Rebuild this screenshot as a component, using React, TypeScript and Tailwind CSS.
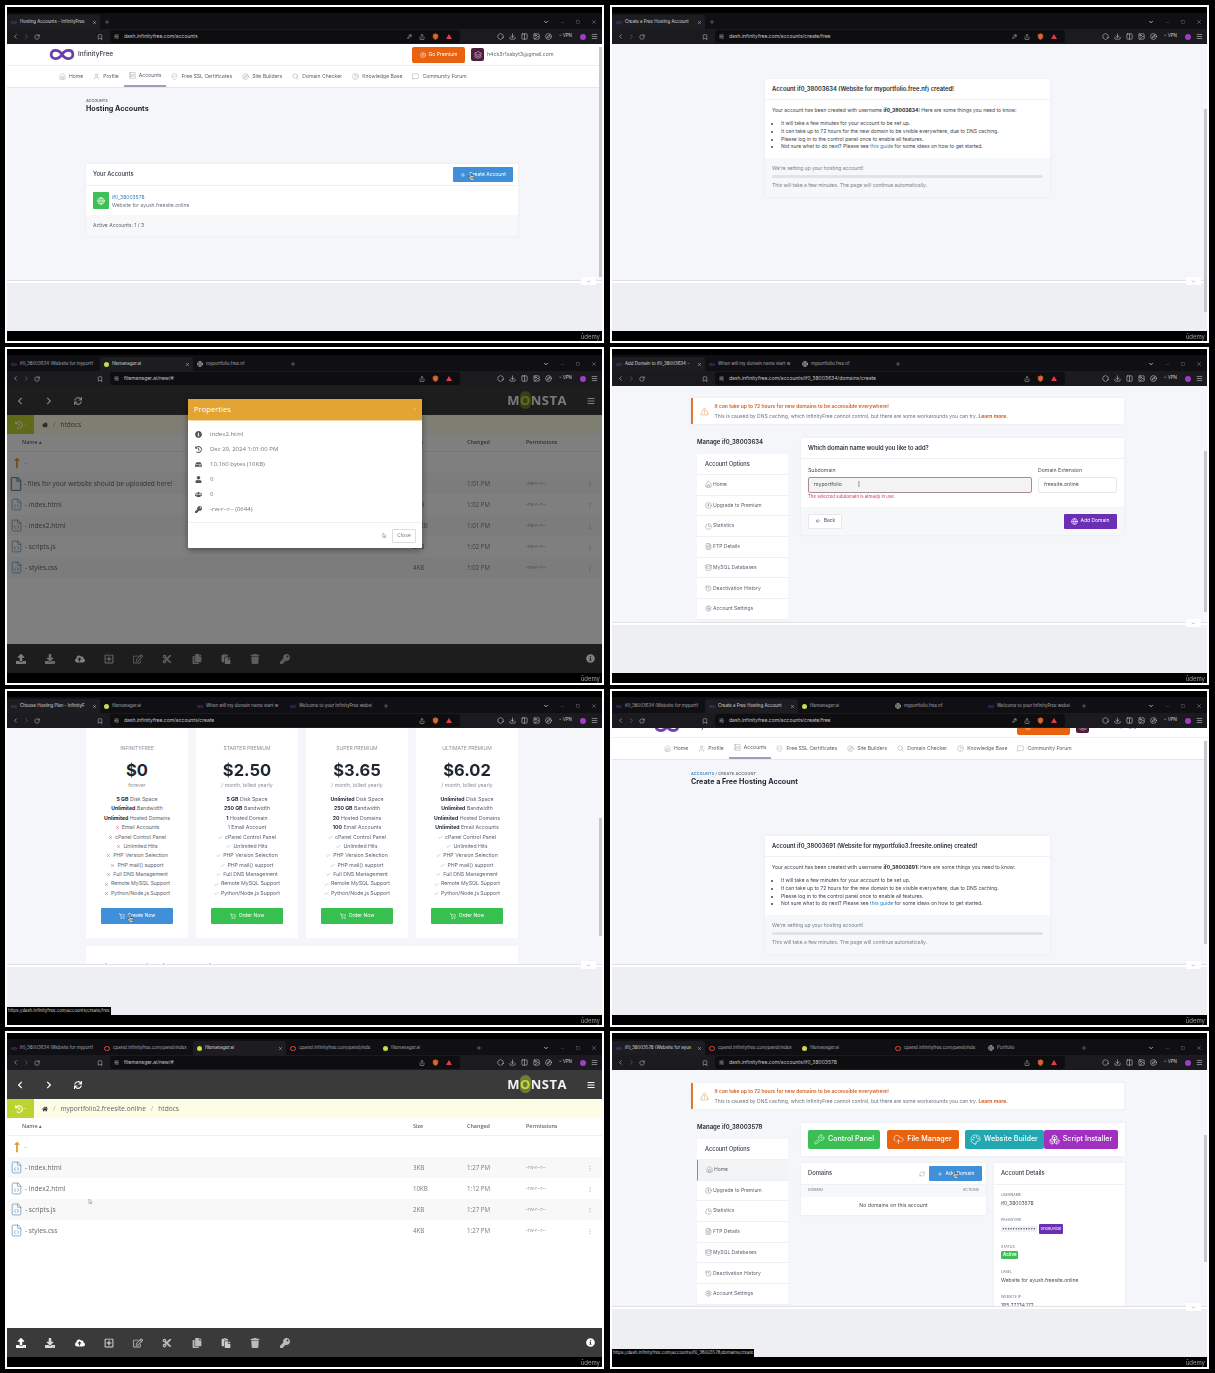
import type { ReactNode } from 'react';
import {
  ArrowLeft, Bookmark, Boxes, Check, ChevronDown, ChevronLeft, ChevronRight, CircleArrowUp, CircleHelp, CloudUpload,
  Columns2, Compass, Database, Download, FileCode, FileText, Globe, Hexagon, History, House, Image, KeyRound, Layers, Menu,
  MessageSquare, Minus, Palette, PieChart, Plus, RefreshCw, RotateCw, Search, Server, Settings, ShieldCheck, ShoppingCart, Share, Shield,
  SlidersHorizontal, Square, TriangleAlert, User, Wrench, X,
} from 'lucide-react';
import {
  FaBars, FaChevronLeft, FaChevronRight, FaCloudUploadAlt, FaCopy, FaCut, FaDownload, FaHandPointer, FaHdd, FaHistory,
  FaHome, FaInfoCircle, FaKey, FaLongArrowAltUp, FaMousePointer, FaPaste, FaRegEdit, FaRegFile, FaRegPlusSquare, FaSync, FaTrash, FaUpload, FaUser, FaUsers,
} from 'react-icons/fa';

type TabKind = 'inf' | 'fm' | 'cp' | 'globe';
type TabInfo = { kind: TabKind; title: string; active?: boolean };

const sans = '[font-family:Inter,sans-serif]';
const monstaFont = '[font-family:"Open_Sans",sans-serif]';

function Favicon({ kind }: { kind: TabKind }) {
  if (kind === 'fm') return <span className="block h-[5px] w-[5px] shrink-0 rounded-full bg-[#c9dc4a]" />;
  if (kind === 'cp') return <span className="block h-[5px] w-[6px] shrink-0 rounded-full border border-[#e0492f]" />;
  if (kind === 'globe') return <Globe className="h-[6px] w-[6px] shrink-0 text-[#d4d4d4]" />;
  return <InfinityMark className="h-[3px] w-[6px] shrink-0" />;
}

function InfinityMark({ className }: { className: string }) {
  return (
    <svg viewBox="0 0 24 12" fill="none" className={className}>
      <path d="M12 6C9 1 2 1 2 6s7 5 10 0 10-5 10 0-7 5-10 0Z" stroke="#6d3fa8" strokeWidth="2.6" />
    </svg>
  );
}

function Chrome({ tabs, url, keyIcon = true }: { tabs: TabInfo[]; url: string; keyIcon?: boolean }) {
  return (
    <>
      <div className={`flex h-[16px] items-end bg-[#101014] text-[4.4px] text-[#a9a9ad] ${sans}`}>
        {tabs.map((t) => (
          <div key={t.title + t.kind} className={`flex h-[14px] w-[93px] shrink-0 items-center gap-[3px] rounded-t-[3px] pl-[4px] pr-[3px] ${t.active ? 'bg-[#1d1d21] text-[#dcdcdc]' : ''}`}>
            <Favicon kind={t.kind} />
            <span className="flex-1 whitespace-nowrap">{t.title}</span>
            {t.active && <X className="h-[5px] w-[5px] shrink-0" />}
          </div>
        ))}
        <Plus className="mb-[4px] ml-[4px] h-[6px] w-[6px] text-[#8f8f95]" />
        <div className="mb-[4px] ml-auto flex items-center gap-[11px] pr-[5px] text-[#8a8a8e]">
          <ChevronDown className="h-[6px] w-[6px] text-[#ddd]" strokeWidth={3} />
          <Minus className="h-[5px] w-[5px] text-[#55555a]" />
          <Square className="h-[4px] w-[4px]" />
          <X className="h-[6px] w-[6px]" />
        </div>
      </div>
      <div className={`flex h-[15px] items-center bg-[#1b1b1f] text-[#c9c9cc] ${sans}`}>
        <div className="flex w-[103px] shrink-0 items-center pl-[5px]">
          <ChevronLeft className="h-[7px] w-[7px]" />
          <ChevronRight className="ml-[4px] h-[7px] w-[7px] text-[#77777c]" />
          <RotateCw className="ml-[4px] h-[6px] w-[6px]" />
          <Bookmark className="ml-[57px] h-[6px] w-[6px]" />
        </div>
        <div className="flex h-[13px] w-[350px] shrink-0 items-center rounded-[3px] bg-[#0e0e11] px-[4px]">
          <SlidersHorizontal className="h-[5px] w-[5px]" />
          <span className="ml-[5px] flex-1 text-[5px] text-[#c4c4c8]">{url}</span>
          {keyIcon && <KeyRound className="mr-[7px] h-[5px] w-[5px]" />}
          <Share className="h-[6px] w-[6px]" />
          <Shield className="ml-[7px] h-[7px] w-[7px] fill-[#d9662f] text-[#d9662f]" />
          <span className="ml-[7px] mr-[4px] h-0 w-0 border-x-[3px] border-b-[5px] border-x-transparent border-b-[#e23b4b]" />
        </div>
        <div className="ml-auto flex items-center gap-[5px] pr-[4px]">
          <Hexagon className="h-[7px] w-[7px]" />
          <Download className="h-[7px] w-[7px]" />
          <Columns2 className="h-[7px] w-[7px]" />
          <Image className="h-[7px] w-[7px]" />
          <Compass className="h-[7px] w-[7px]" />
          <span className="ml-[2px] text-[4.5px]">◦ VPN</span>
          <span className="ml-[3px] h-[6px] w-[6px] rounded-full bg-[#a13cc9]" />
          <Menu className="h-[7px] w-[7px]" />
        </div>
      </div>
    </>
  );
}

function Frame({ chrome, children, thumb, status, noStrip }: { chrome: ReactNode; children: ReactNode; thumb?: string; status?: string; noStrip?: boolean }) {
  return (
    <div className="relative h-[338px] w-[599px] overflow-hidden border-2 border-white bg-black">
      <div className="flex h-full flex-col pt-[6px] blur-[0.35px]">
        {chrome}
        {noStrip ? (
          <div className="relative h-[287px] overflow-hidden">{children}</div>
        ) : (
          <>
            <div className="relative h-[236px] overflow-hidden bg-[#f4f6f9]">{children}</div>
            <div className="h-[1px] bg-[#dfe1e5]" />
            <div className="h-[2px] bg-white" />
            <div className="relative h-[48px] bg-[#eeeff3]">
              {status && <div className={`absolute bottom-0 left-0 bg-black px-[1px] text-[4.3px] leading-[8px] whitespace-nowrap text-[#cfcfcf] ${sans}`}>{status}</div>}
            </div>
            <div className="absolute right-[6px] top-[270px] flex h-[8px] w-[15px] items-center justify-center bg-white">
              <ChevronDown className="h-[5px] w-[5px] text-[#666]" />
            </div>
          </>
        )}
        <div className={`flex flex-1 items-center justify-end pr-[2px] text-[6px] text-[#a0a0a0] ${sans}`}>ûdemy</div>
        {thumb && <div className={`absolute right-0 w-[3px] bg-[#c5c7cb] ${thumb}`} />}
      </div>
    </div>
  );
}

const navItems = [
  { label: 'Home', icon: House },
  { label: 'Profile', icon: User },
  { label: 'Accounts', icon: Server },
  { label: 'Free SSL Certificates', icon: ShieldCheck },
  { label: 'Site Builders', icon: Compass },
  { label: 'Domain Checker', icon: Search },
  { label: 'Knowledge Base', icon: CircleHelp },
  { label: 'Community Forum', icon: MessageSquare },
];

function SiteHeader({ scrolled }: { scrolled?: boolean }) {
  return (
    <div className={`bg-white ${sans} ${scrolled ? '-mt-[12px]' : ''}`}>
      <div className="flex h-[22px] items-center border-b border-[#eceef1] pl-[42px]">
        <InfinityMark className="h-[13px] w-[26px]" />
        <span className="ml-[3px] w-[35px] whitespace-nowrap text-[6.5px] font-medium text-[#333a45]">InfinityFree</span>
        <div className="ml-[299px] flex h-[16px] w-[53px] items-center justify-center gap-[3px] rounded-[2px] bg-[#e8620f] text-[5px] text-white">
          <CircleArrowUp className="h-[6px] w-[6px]" /> Go Premium
        </div>
        <span className="ml-[6px] flex h-[13px] w-[13px] items-center justify-center rounded-[2px] bg-[#4c1d3d]">
          <Layers className="h-[8px] w-[8px] text-[#e3b9cf]" />
        </span>
        <span className="ml-[3px] text-[5.2px] text-[#5f6773]">h4ck3r1xabyt3@gmail.com</span>
      </div>
      <div className="flex h-[22px] items-stretch border-b border-[#e6e8ec] pl-[47px] text-[5.1px] text-[#5c6470]">
        {navItems.map((n) => (
          <div key={n.label} className={`flex items-center gap-[3px] px-[5px] ${n.label === 'Accounts' ? 'border-b-2 border-[#a79bbd]' : ''}`}>
            <n.icon className="h-[7px] w-[7px] text-[#8b929c]" strokeWidth={1.4} />
            {n.label}
          </div>
        ))}
      </div>
    </div>
  );
}

function SetupCard({ id, site, mt }: { id: string; site: string; mt: string }) {
  return (
    <div className={`ml-[153px] w-[285px] text-[5px] text-[#3e4650] shadow-[0_0_2px_#e5e7eb] ${sans} ${mt}`}>
      <div className="flex h-[21px] items-center border-b border-[#eef0f3] bg-white px-[7px] text-[5.8px] font-semibold text-[#232a34]">
        Account {id} (Website for {site}) created!
      </div>
      <div className="h-[58px] bg-white px-[7px] pt-[7px]">
        <p className="leading-[7px]">
          Your account has been created with username <b className="text-[#1f2630]">{id}</b>! Here are some things you need to know:
        </p>
        <ul className="mt-[6px] list-disc pl-[9px] leading-[7.8px]">
          <li>It will take a few minutes for your account to be set up.</li>
          <li>It can take up to 72 hours for the new domain to be visible everywhere, due to DNS caching.</li>
          <li>Please log in to the control panel once to enable all features.</li>
          <li>Not sure what to do next? Please see <span className="text-[#2f80c2]">this guide</span> for some ideas on how to get started.</li>
        </ul>
      </div>
      <div className="h-[39px] bg-[#f5f7f9] px-[7px] pt-[7px] text-[#7a828d]">
        <div className="leading-[7px]">We're setting up your hosting account!</div>
        <div className="mt-[3px] h-[3px] rounded-full bg-[#e0e3e8]" />
        <div className="mt-[4px] leading-[7px]">This will take a few minutes. The page will continue automatically.</div>
      </div>
    </div>
  );
}

function HostingAccounts() {
  return (
    <>
      <SiteHeader />
      <div className={`ml-[79px] w-[432px] ${sans}`}>
        <div className="pt-[10px] text-[3.8px] font-semibold leading-[5px] text-[#66707c]">ACCOUNTS</div>
        <div className="mt-[1px] text-[7.2px] font-bold leading-[10px] text-[#232a34]">Hosting Accounts</div>
        <div className="mt-[50px] shadow-[0_0_2px_#e5e7eb]">
          <div className="flex h-[22px] items-center justify-between border-b border-[#eef0f3] bg-white pl-[7px] pr-[5px] text-[5.8px] font-medium text-[#2b323c]">
            Your Accounts
            <div className="flex h-[15px] w-[60px] items-center justify-center gap-[3px] rounded-[1px] bg-[#3f90d9] text-[5px] font-normal text-white">
              <Plus className="h-[6px] w-[6px]" /> Create Account
            </div>
          </div>
          <div className="flex h-[29px] items-center gap-[3px] bg-white px-[7px]">
            <span className="flex h-[17px] w-[16px] items-center justify-center rounded-[1px] bg-[#3fbf55]">
              <Globe className="h-[8px] w-[8px] text-white" />
            </span>
            <div className="text-[5px] leading-[8px]">
              <div className="text-[#3a85c4]">if0_38003578</div>
              <div className="text-[#6d7581]">Website for ayush.freesite.online</div>
            </div>
          </div>
          <div className="flex h-[21px] items-center bg-[#f7f8fa] px-[7px] text-[5px] text-[#5c6470]">Active Accounts: 1 / 3</div>
        </div>
      </div>
      <FaHandPointer className="absolute left-[461px] top-[129px] h-[7px] w-[7px] fill-white stroke-black stroke-[30]" />
    </>
  );
}

const plans = [
  { name: 'INFINITYFREE', price: '$0', sub: 'forever', tops: [['5 GB', 'Disk Space'], ['Unlimited', 'Bandwidth'], ['Unlimited', 'Hosted Domains']], email: '', ok: false },
  { name: 'STARTER PREMIUM', price: '$2.50', sub: '/ month, billed yearly', tops: [['5 GB', 'Disk Space'], ['250 GB', 'Bandwidth'], ['1', 'Hosted Domain']], email: '1', ok: true },
  { name: 'SUPER PREMIUM', price: '$3.65', sub: '/ month, billed yearly', tops: [['Unlimited', 'Disk Space'], ['250 GB', 'Bandwidth'], ['20', 'Hosted Domains']], email: '100', ok: true },
  { name: 'ULTIMATE PREMIUM', price: '$6.02', sub: '/ month, billed yearly', tops: [['Unlimited', 'Disk Space'], ['Unlimited', 'Bandwidth'], ['Unlimited', 'Hosted Domains']], email: 'Unlimited', ok: true },
];
const planFeatures = ['cPanel Control Panel', 'Unlimited Hits', 'PHP Version Selection', 'PHP mail() support', 'Full DNS Management', 'Remote MySQL Support', 'Python/Node.js Support'];

function Pricing() {
  return (
    <div className={`ml-[79px] w-[432px] ${sans}`}>
      <div className="grid grid-cols-4 gap-x-[8px]">
        {plans.map((p) => (
          <div key={p.name} className="flex h-[210px] flex-col items-center bg-white pt-[17px] text-[5.2px] text-[#5c6470]">
            <div className="text-[5px] leading-[6px] text-[#8b929c]">{p.name}</div>
            <div className="mt-[8px] text-[16.5px] font-bold leading-[22px] text-[#1f2630]">{p.price}</div>
            <div className="mt-[1px] leading-[6px] text-[#8b929c]">{p.sub}</div>
            <div className="mt-[7px] flex flex-col items-center leading-[9.37px]">
              {p.tops.map(([a, b]) => (
                <div key={b}><b className="text-[#1f2630]">{a}</b> {b}</div>
              ))}
              {p.ok ? (
                <div className="whitespace-nowrap"><b className={p.email === '1' ? 'font-normal' : 'text-[#1f2630]'}>{p.email}</b> {p.email === '1' ? 'Email Account' : 'Email Accounts'}</div>
              ) : (
                <div className="flex items-center gap-[2px]"><X className="h-[5px] w-[5px] text-[#c2405e]" />Email Accounts</div>
              )}
              {planFeatures.map((f) => (
                <div key={f} className="flex items-center gap-[2px]">
                  {p.ok ? <Check className="h-[5px] w-[5px] text-[#45b867]" /> : <X className="h-[5px] w-[5px] text-[#c2405e]" />}
                  {f}
                </div>
              ))}
            </div>
            <div className={`mt-[10px] flex h-[16px] w-[72px] items-center justify-center gap-[3px] rounded-[1px] text-[5px] text-white ${p.ok ? 'bg-[#37bf4f]' : 'bg-[#3f90d9]'}`}>
              <ShoppingCart className="h-[6px] w-[6px]" /> {p.ok ? 'Order Now' : 'Create Now'}
            </div>
          </div>
        ))}
      </div>
      <div className="mt-[8px] h-[40px] bg-white px-[15px] pt-[16px] text-[6px] font-semibold text-[#2b323c]">View more details on iFastNet's website</div>
      <FaHandPointer className="absolute left-[120px] top-[187px] h-[7px] w-[7px] fill-white stroke-black stroke-[30]" />
    </div>
  );
}

const sideItems = [
  { label: 'Home', icon: House },
  { label: 'Upgrade to Premium', icon: CircleArrowUp },
  { label: 'Statistics', icon: PieChart },
  { label: 'FTP Details', icon: FileText },
  { label: 'MySQL Databases', icon: Database },
  { label: 'Deactivation History', icon: History },
  { label: 'Account Settings', icon: Settings },
];

function Alert({ mt }: { mt: string }) {
  return (
    <div className={`flex h-[26px] items-center border-l-2 border-[#e0772f] bg-white pl-[7px] shadow-[0_0_2px_#e5e7eb] ${mt}`}>
      <TriangleAlert className="h-[9px] w-[9px] text-[#d9843f]" strokeWidth={1.3} />
      <div className="ml-[6px] text-[5px] leading-[10px] text-[#6d7581]">
        <div className="font-semibold text-[#d0622a]">It can take up to 72 hours for new domains to be accessible everywhere!</div>
        <div>This is caused by DNS caching, which InfinityFree cannot control, but there are some workarounds you can try. <b className="text-[#d0622a]">Learn more.</b></div>
      </div>
    </div>
  );
}

function Sidebar({ name, active }: { name: string; active?: boolean }) {
  return (
    <div className="ml-[6.5px] w-[90.5px] shrink-0">
      <div className="h-[16px] text-[6px] font-semibold leading-[8px] text-[#232a34]">{name}</div>
      <div className="bg-white text-[5px] text-[#5c6470]">
        <div className="flex h-[21px] items-center border-b border-[#eef0f3] px-[8px] text-[5.6px] font-medium text-[#333a45]">Account Options</div>
        {sideItems.map((s) => (
          <div key={s.label} className={`flex h-[20.7px] items-center gap-[1px] border-b border-[#eef0f3] pl-[8px] ${active && s.label === 'Home' ? 'border-l border-l-[#5aa0b8] bg-[#f2f3f5]' : ''}`}>
            <s.icon className="h-[7px] w-[7px]" strokeWidth={1.3} />
            {s.label}
          </div>
        ))}
      </div>
    </div>
  );
}

function AddDomain() {
  return (
    <div className={`ml-[78.5px] w-[433px] ${sans}`}>
      <Alert mt="mt-[12px]" />
      <div className="mt-[14px] flex gap-[13.5px]">
        <Sidebar name="Manage if0_38003634" />
        <div className="h-[97px] flex-1 shadow-[0_0_2px_#e5e7eb]">
          <div className="flex h-[21px] items-center border-b border-[#eef0f3] bg-white px-[7px] text-[5.8px] font-semibold text-[#2b323c]">Which domain name would you like to add?</div>
          <div className="h-[48px] bg-white px-[7px] pt-[8px] text-[5.2px] text-[#4a525d]">
            <div className="flex gap-[6px]">
              <div className="w-[224px]">
                <div className="leading-[7px]">Subdomain</div>
                <div className="mt-[3px] flex h-[16px] items-center rounded-[2px] border border-[#a98a97] bg-[#f3f3f4] px-[5px] text-[#4a525d]">myportfolio</div>
              </div>
              <div className="flex-1">
                <div className="leading-[7px]">Domain Extension</div>
                <div className="mt-[3px] flex h-[16px] items-center rounded-[2px] border border-[#e6e8ec] bg-white px-[5px]">freesite.online</div>
              </div>
            </div>
            <div className="mt-[1px] text-[4.4px] leading-[6px] text-[#c2405e]">The selected subdomain is already in use.</div>
          </div>
          <div className="flex h-[28px] items-center justify-between bg-[#f5f7f9] px-[7px] text-[5px]">
            <div className="flex h-[15px] w-[34px] items-center justify-center gap-[3px] rounded-[1px] border border-[#e6e8ec] bg-white text-[#4a525d]">
              <ArrowLeft className="h-[6px] w-[6px]" /> Back
            </div>
            <div className="flex h-[15px] w-[53px] items-center justify-center gap-[3px] rounded-[1px] bg-[#6a2fb4] text-white">
              <Globe className="h-[7px] w-[7px]" /> Add Domain
            </div>
          </div>
        </div>
      </div>
      <span className="absolute left-[246px] top-[95px] text-[7px] leading-[7px] text-[#666]">I</span>
    </div>
  );
}

const quickLinks = [
  { label: 'Control Panel', icon: Wrench, cls: 'w-[72px] bg-[#3bbf55]', ml: '' },
  { label: 'File Manager', icon: CloudUpload, cls: 'w-[72px] bg-[#e8620f]', ml: 'ml-[6.5px]' },
  { label: 'Website Builder', icon: Palette, cls: 'w-[79px] bg-[#22a8b0]', ml: 'ml-[6px]' },
  { label: 'Script Installer', icon: Boxes, cls: 'w-[74px] bg-[#a12fc0]', ml: '' },
];

const details = [
  { label: 'USERNAME', value: 'if0_38003578', cls: 'h-[25px]' },
  { label: 'PASSWORD', value: '', cls: 'h-[27px]' },
  { label: 'STATUS', value: '', cls: 'h-[25px]' },
  { label: 'LABEL', value: 'Website for ayush.freesite.online', cls: 'h-[25px]' },
  { label: 'WEBSITE IP', value: '185.27.134.172', cls: 'h-[25px]' },
];

function ManageAccount() {
  return (
    <div className={`ml-[78.5px] w-[433px] ${sans}`}>
      <Alert mt="mt-[13px]" />
      <div className="mt-[14px] flex gap-[13.5px]">
        <Sidebar name="Manage if0_38003578" active />
        <div className="flex-1">
          <div className="flex h-[33px] items-center bg-white px-[7px] shadow-[0_0_2px_#e5e7eb]">
            {quickLinks.map((q) => (
              <div key={q.label} className={`flex h-[19px] shrink-0 items-center justify-center gap-[3px] rounded-[2px] text-[7.2px] font-medium whitespace-nowrap text-white ${q.cls} ${q.ml}`}>
                <q.icon className="h-[11px] w-[11px]" strokeWidth={1.4} />
                {q.label}
              </div>
            ))}
          </div>
          <div className="mt-[7px] flex gap-[8px]">
            <div className="h-[52px] w-[185px] bg-white shadow-[0_0_2px_#e5e7eb]">
              <div className="flex h-[22px] items-center border-b border-[#eef0f3] pl-[7px] pr-[4px] text-[5.8px] font-medium text-[#333a45]">
                Domains
                <RefreshCw className="ml-auto mr-[4px] h-[6px] w-[6px] text-[#a5abb4]" />
                <div className="flex h-[15px] w-[53px] items-center justify-center gap-[3px] rounded-[1px] bg-[#3f90d9] text-[5px] font-normal text-white">
                  <Plus className="h-[6px] w-[6px]" /> Add Domain
                </div>
              </div>
              <div className="flex h-[12px] items-center justify-between bg-[#f7f8fa] px-[7px] text-[3.6px] text-[#66707c]">
                <span>DOMAIN</span>
                <span>ACTIONS</span>
              </div>
              <div className="flex h-[18px] items-center justify-center text-[5.2px] text-[#4a525d]">No domains on this account</div>
            </div>
            <div className="flex-1 bg-white text-[5px] text-[#4a525d] shadow-[0_0_2px_#e5e7eb]">
              <div className="flex h-[22px] items-center border-b border-[#eef0f3] px-[7px] text-[5.8px] font-medium text-[#333a45]">Account Details</div>
              <div className="px-[7px] pt-[8px]">
                {details.map((d) => (
                  <div key={d.label} className={d.cls}>
                    <div className="text-[3.6px] leading-[5px] text-[#66707c]">{d.label}</div>
                    {d.label === 'PASSWORD' && (
                      <div className="mt-[1px] flex items-center gap-[2px]">
                        <span className="bg-[#eef0f3] px-[1px] text-[4.6px] leading-[6px]">•••••••••••••</span>
                        <span className="rounded-[1px] bg-[#6a2fb4] px-[2px] text-[4px] leading-[10px] text-white">Show/Hide</span>
                      </div>
                    )}
                    {d.label === 'STATUS' && <span className="mt-[1px] inline-block rounded-[1px] bg-[#3bbf55] px-[2px] text-[4.4px] font-semibold leading-[8px] text-white">Active</span>}
                    {d.value && <div className="mt-[2px] leading-[7px]">{d.value}</div>}
                  </div>
                ))}
              </div>
            </div>
          </div>
        </div>
      </div>
      <FaHandPointer className="absolute left-[340px] top-[101px] h-[7px] w-[7px] fill-white stroke-black stroke-[30]" />
    </div>
  );
}

const toolIcons = [
  { icon: FaUpload, cls: 'text-white' },
  { icon: FaDownload, cls: 'text-[#dddddd]' },
  { icon: FaCloudUploadAlt, cls: 'text-white' },
  { icon: FaRegPlusSquare, cls: 'text-[#dddddd]' },
  { icon: FaRegEdit, cls: 'text-[#bbbbbb]' },
  { icon: FaCut, cls: 'text-[#bbbbbb]' },
  { icon: FaCopy, cls: 'text-[#bbbbbb]' },
  { icon: FaPaste, cls: 'text-[#cccccc]' },
  { icon: FaTrash, cls: 'text-[#bbbbbb]' },
  { icon: FaKey, cls: 'text-[#bbbbbb]' },
];

function Monsta({ path, rows, dim, children }: { path: string[]; rows: { icon?: 'plain'; name: string; size: string; time: string }[]; dim?: boolean; children?: ReactNode }) {
  return (
    <div className={`relative flex h-full flex-col bg-white ${monstaFont}`}>
      <div className="flex h-[29px] shrink-0 items-center bg-[#3a3a3a] text-white">
        <FaChevronLeft className="ml-[9px] h-[8px] w-[8px]" />
        <FaChevronRight className="ml-[21px] h-[8px] w-[8px]" />
        <FaSync className="ml-[21px] h-[8px] w-[8px]" />
        <div className="ml-auto text-[13px] font-bold leading-none tracking-[0.5px] text-[#f2f2f2]">M<span className="rounded-full bg-[#c6dc33]/40 text-[#c6dc33]">O</span>NSTA</div>
        <FaBars className="ml-[20px] mr-[7px] h-[8px] w-[8px]" />
      </div>
      <div className="flex h-[19px] shrink-0 items-center bg-[#fdfde6] text-[6.6px] text-[#666]">
        <div className="flex h-full w-[27px] items-center justify-center gap-[1px] bg-[#bcd42f] text-white">
          <FaHistory className="h-[8px] w-[8px]" />
          <span className="text-[6px]">-</span>
        </div>
        <FaHome className="ml-[8px] h-[6px] w-[6px] text-[#333]" />
        {path.map((p) => (
          <span key={p} className="ml-[5px]">
            <span className="mr-[5px] text-[#aaa]">/</span>
            {p}
          </span>
        ))}
      </div>
      <div className="grid h-[18px] shrink-0 grid-cols-[406px_54px_59px_61px_15px] items-center border-b border-[#efefef] text-[5.4px] font-semibold text-[#666]">
        <span className="pl-[15px]">Name ▴</span>
        <span>Size</span>
        <span>Changed</span>
        <span>Permissions</span>
      </div>
      <div className="flex h-[21px] shrink-0 items-center pl-[6px] text-[6px] text-[#888]">
        <FaLongArrowAltUp className="h-[12px] w-[8px] text-[#e0a23a]" />
        <span className="ml-[3px]">..</span>
      </div>
      {rows.map((r, i) => (
        <div key={r.name} className={`grid h-[21px] shrink-0 grid-cols-[406px_54px_59px_61px_15px] items-center text-[6.2px] text-[#7a7a7a] ${i % 2 === 0 ? 'bg-[#f8f8f8]' : 'bg-white'}`}>
          <span className="flex items-center whitespace-nowrap pl-[3px] text-[6.6px] text-[#666]">
            {r.icon === 'plain' ? <FaRegFile className="h-[14px] w-[12px] text-[#6f94b3]" /> : <FileCode className="h-[15px] w-[13px] text-[#5f8fb5]" strokeWidth={1.3} />}
            <span className="ml-[2px]">- {r.name}</span>
          </span>
          <span>{r.size}</span>
          <span>{r.time}</span>
          <span className="text-[5px] text-[#999]">-rw-r--r--</span>
          <span className="text-[6px] leading-none text-[#999]">⋮</span>
        </div>
      ))}
      <div className="mt-auto flex h-[29px] shrink-0 items-center bg-[#3a3a3a] pl-[9px] pr-[7px] text-white">
        {toolIcons.map((t, i) => (
          <span key={i} className="flex w-[29.3px] shrink-0">
            <t.icon className={`h-[10px] w-[10px] ${t.cls}`} />
          </span>
        ))}
        <FaInfoCircle className="ml-auto h-[9px] w-[9px]" />
      </div>
      {dim && <div className="absolute inset-0 bg-black/50" />}
      {children}
    </div>
  );
}

const propRows = [
  { icon: FaInfoCircle, text: 'index2.html' },
  { icon: FaHistory, text: 'Dec 29, 2024 1:01:00 PM' },
  { icon: FaHdd, text: '10,160 bytes (10KB)' },
  { icon: FaUser, text: '0' },
  { icon: FaUsers, text: '0' },
  { icon: FaKey, text: '-rw-r--r-- (0644)' },
];

function PropertiesModal() {
  return (
    <div className="absolute left-[181px] top-[13px] w-[234px] overflow-hidden rounded-[1px] bg-white shadow-[0_2px_6px_rgba(0,0,0,0.4)]">
      <div className="flex h-[22px] items-center justify-between border-b border-[#f1dba9] bg-[#e4a434] px-[6px] text-[7.6px] text-white">
        Properties
        <span className="text-[5px] text-[#f2d08c]">×</span>
      </div>
      <div className="border-b border-[#eee] pb-[5px] pt-[6px] text-[6px] text-[#777]">
        {propRows.map((r, i) => (
          <div key={i} className="flex h-[15px] items-center pl-[7px]">
            <r.icon className="h-[7px] w-[7px] text-[#555]" />
            <span className="ml-[8px]">{r.text}</span>
          </div>
        ))}
      </div>
      <div className="flex h-[25px] items-center justify-end pr-[6px]">
        <FaMousePointer className="mr-[5px] h-[5px] w-[5px] fill-white stroke-[#555] stroke-[40]" />
        <div className="flex h-[14px] w-[24px] items-center justify-center rounded-[1px] border border-[#ddd] text-[5.4px] text-[#777]">Close</div>
      </div>
    </div>
  );
}

const inf = (title: string, active?: boolean): TabInfo => ({ kind: 'inf', title, active });
const fm = (active?: boolean): TabInfo => ({ kind: 'fm', title: 'filemanager.ai', active });
const cp: TabInfo = { kind: 'cp', title: 'cpanel.infinityfree.com/panel/index' };
const cp2: TabInfo = { kind: 'cp', title: 'cpanel.infinityfree.com/panel/inde' };
const portfolio: TabInfo = { kind: 'globe', title: 'myportfolio.free.nf' };
const when = inf('When will my domain name start w');
const welcome = inf('Welcome to your InfinityFree websi');

export default function App() {
  return (
    <div className="grid min-h-[1373px] w-[1215px] grid-cols-[599px_599px] content-start gap-x-[6px] gap-y-[4px] bg-black px-[5px] pt-[5px]">
      <Frame thumb="top-[40px] h-[230px]" chrome={<Chrome tabs={[inf('Hosting Accounts - InfinityFree', true)]} url="dash.infinityfree.com/accounts" />}>
        <HostingAccounts />
      </Frame>
      <Frame thumb="top-[102px] h-[203px]" chrome={<Chrome tabs={[inf('Create a Free Hosting Account', true)]} url="dash.infinityfree.com/accounts/create/free" />}>
        <SetupCard id="if0_38003634" site="myportfolio.free.nf" mt="mt-[35px]" />
      </Frame>

      <Frame noStrip chrome={<Chrome keyIcon={false} tabs={[inf('if0_38003634 (Website for myportf'), fm(true), portfolio]} url="filemanager.ai/new/#" />}>
        <Monsta
          dim
          path={['htdocs']}
          rows={[
            { icon: 'plain', name: 'files for your website should be uploaded here!', size: '', time: '1:01 PM' },
            { name: 'index.html', size: '3KB', time: '1:02 PM' },
            { name: 'index2.html', size: '10KB', time: '1:01 PM' },
            { name: 'scripts.js', size: '2KB', time: '1:02 PM' },
            { name: 'styles.css', size: '4KB', time: '1:02 PM' },
          ]}
        >
          <PropertiesModal />
        </Monsta>
      </Frame>
      <Frame thumb="top-[102px] h-[161px]" chrome={<Chrome keyIcon={false} tabs={[inf('Add Domain to if0_38003634 -', true), when, portfolio]} url="dash.infinityfree.com/accounts/if0_38003634/domains/create" />}>
        <AddDomain />
      </Frame>

      <Frame thumb="top-[127px] h-[118px]" status="https://dash.infinityfree.com/accounts/create/free" chrome={<Chrome keyIcon={false} tabs={[inf('Choose Hosting Plan - InfinityF', true), fm(), when, welcome]} url="dash.infinityfree.com/accounts/create" />}>
        <Pricing />
      </Frame>
      <Frame thumb="top-[50px] h-[203px]" chrome={<Chrome tabs={[inf('if0_38003634 (Website for myportf'), inf('Create a Free Hosting Account', true), fm(), portfolio, welcome]} url="dash.infinityfree.com/accounts/create/free" />}>
        <SiteHeader scrolled />
        <div className={`ml-[79px] w-[432px] ${sans}`}>
          <div className="pt-[11px] text-[3.8px] font-semibold leading-[5px] tracking-[0.2px] text-[#66707c]">
            <span className="text-[#3a85c4]">ACCOUNTS</span> / CREATE ACCOUNT
          </div>
          <div className="mt-[1px] text-[7.2px] font-bold leading-[10px] text-[#232a34]">Create a Free Hosting Account</div>
        </div>
        <SetupCard id="if0_38003691" site="myportfolio3.freesite.online" mt="mt-[49px]" />
      </Frame>

      <Frame noStrip chrome={<Chrome keyIcon={false} tabs={[inf('if0_38003634 (Website for myportf'), cp, fm(true), cp2, fm()]} url="filemanager.ai/new/#" />}>
        <Monsta
          path={['myportfolio2.freesite.online', 'htdocs']}
          rows={[
            { name: 'index.html', size: '3KB', time: '1:27 PM' },
            { name: 'index2.html', size: '10KB', time: '1:12 PM' },
            { name: 'scripts.js', size: '2KB', time: '1:27 PM' },
            { name: 'styles.css', size: '4KB', time: '1:27 PM' },
          ]}
        >
          <FaMousePointer className="absolute left-[81px] top-[129px] h-[5px] w-[5px] fill-white stroke-[#555] stroke-[40]" />
        </Monsta>
      </Frame>
      <Frame thumb="top-[102px] h-[127px]" status="https://dash.infinityfree.com/accounts/if0_38003578/domains/create" chrome={<Chrome keyIcon={false} tabs={[inf('if0_38003578 (Website for ayus', true), cp, fm(), cp2, { kind: 'globe', title: 'Portfolio' }]} url="dash.infinityfree.com/accounts/if0_38003578" />}>
        <ManageAccount />
      </Frame>
    </div>
  );
}
